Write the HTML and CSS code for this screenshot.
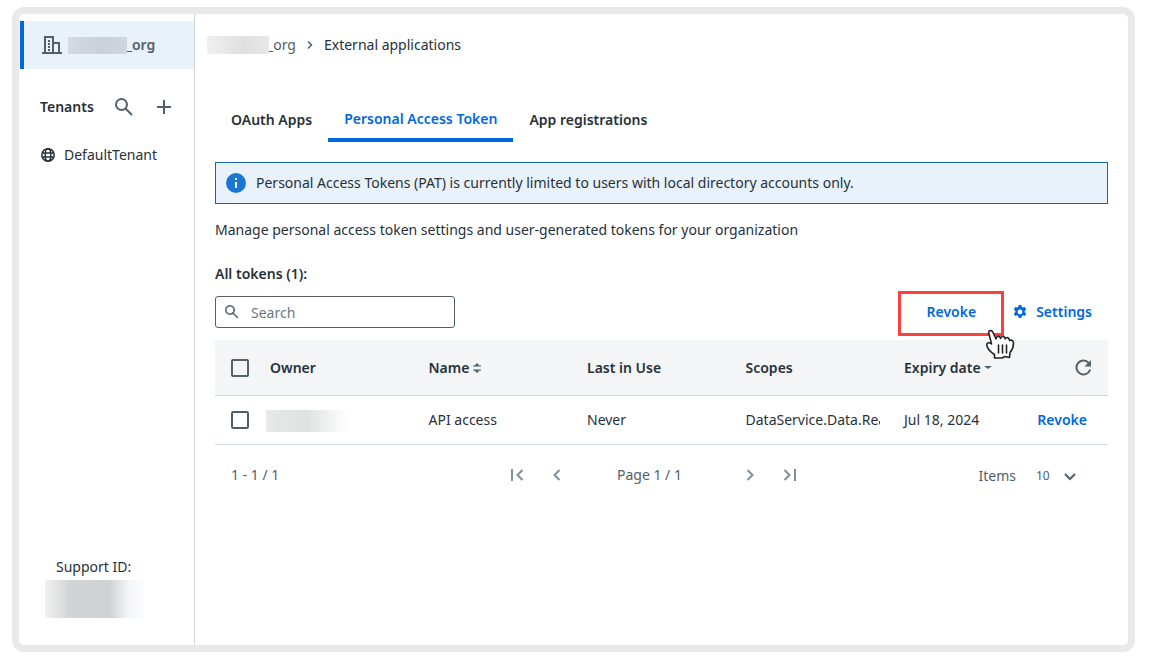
FILE: index.html
```html
<!DOCTYPE html>
<html lang="en">
<head>
<meta charset="utf-8">
<title>External applications</title>
<link rel="stylesheet" href="styles.css">
</head>
<body>
<div class="frame">
  <aside class="sidebar">
    <a class="org" href="#">
      <svg class="org-icon" width="20" height="18" viewBox="0 0 20 18" fill="none" stroke="currentColor" stroke-width="2"><path d="M0 17h20M3 17V1h8v16M11 7h6v10"/><path d="M7 4v11" stroke-dasharray="2 1"/></svg>
      <span class="redacted redacted-org"></span><span>_org</span>
    </a>
    <div class="tenants">
      <span class="tenants-title">Tenants</span>
      <button class="icon-button" aria-label="Search tenants"><svg width="18" height="18" viewBox="0 0 18 18" fill="none" stroke="currentColor" stroke-width="2"><circle cx="6.500" cy="6.500" r="5.500"/><path d="M10.500 10.500l6.500 6.500"/></svg></button>
      <button class="icon-button" aria-label="Add tenant"><svg width="14" height="14" viewBox="0 0 14 14" fill="none" stroke="currentColor" stroke-width="2"><path d="M7 0v14M0 7h14"/></svg></button>
    </div>
    <a class="tenant" href="#">
      <svg width="14" height="14" viewBox="0 0 14 14" fill="none" stroke="currentColor" stroke-width="1.500"><circle cx="7" cy="7" r="6.200"/><ellipse cx="7" cy="7" rx="2.800" ry="6.200"/><path d="M1.200 4.900h11.600M1.200 9.100h11.600"/></svg>
      <span>DefaultTenant</span>
    </a>
    <div class="support">
      <span class="support-label">Support ID:</span>
      <span class="redacted redacted-support"></span>
    </div>
  </aside>
  <main class="main">
    <nav class="breadcrumb" aria-label="Breadcrumb">
      <a class="crumb" href="#"><span class="redacted redacted-crumb"></span>_org</a>
      <svg width="6" height="10" viewBox="0 0 6 10" fill="none" stroke="#526069" stroke-width="1.500"><path d="M1 1.500L4.500 5 1 8.500"/></svg>
      <span>External applications</span>
    </nav>
    <div class="tabs" role="tablist">
      <button class="tab" role="tab">OAuth Apps</button>
      <button class="tab tab-active" role="tab" aria-selected="true">Personal Access Token</button>
      <button class="tab" role="tab">App registrations</button>
    </div>
    <div class="content">
      <div class="notice">
        <svg width="20" height="20" viewBox="0 0 20 20"><circle cx="10" cy="10" r="10" fill="#1976d2"/><path d="M9 5h2v2H9zM9 9h2v6H9z" fill="#fff"/></svg>
        <span>Personal Access Tokens (PAT) is currently limited to users with local directory accounts only.</span>
      </div>
      <p class="description">Manage personal access token settings and user-generated tokens for your organization</p>
      <h2 class="heading">All tokens (1):</h2>
      <div class="toolbar">
        <label class="search">
          <svg width="14" height="14" viewBox="0 0 14 14" fill="none" stroke="currentColor" stroke-width="1.500"><circle cx="5" cy="5" r="4.200"/><path d="M8 8l5 5"/></svg>
          <input type="text" placeholder="Search" aria-label="Search">
        </label>
        <div class="actions">
          <div class="highlight">
            <button class="link-button">Revoke</button>
            <svg class="hand" width="30" height="32" viewBox="0 0 30 32" fill="#fff" stroke="#222" stroke-width="1.600" stroke-linejoin="round" stroke-linecap="round"><path d="M3 5C1.500 1.500 5.500.500 7 3.500L10 10C10.500 6.500 14 6.500 14.500 9.500 15.500 6.500 19 7 19.200 10 20.500 7.500 23.500 8.500 23.500 11.500 26 10.500 27.500 12 27.500 14.500c0 4-1 6-3.500 9l-.500 5-4.500-1-3 1.500L8.500 29v-3.500C4.500 23 2 20.500 1 17c-1-3.500 2-4 4.500-2z"/><path d="M12.500 16v8M16.500 16v8M20.500 16v8" fill="none"/></svg>
          </div>
          <button class="link-button settings">
            <svg width="14" height="14" viewBox="0 0 14 14" fill="currentColor" fill-rule="evenodd"><path d="M5.600 0h2.800l.400 1.900 1.200.700 1.800-.700 1.400 2.500-1.500 1.300v1.500l1.500 1.300-1.400 2.500-1.800-.700-1.200.700-.400 1.900H5.600l-.400-1.900-1.200-.700-1.800.700-1.400-2.500 1.500-1.300V5.700L.800 4.400l1.400-2.500 1.800.700 1.200-.700zM7 4.600a2.400 2.400 0 100 4.800 2.400 2.400 0 000-4.800z"/></svg>
            Settings
          </button>
        </div>
      </div>
      <table class="tokens">
        <colgroup><col class="col-check"><col class="col-text"><col class="col-text"><col class="col-text"><col class="col-text"><col><col class="col-action"></colgroup>
        <thead>
          <tr>
            <th><input class="check" type="checkbox" aria-label="Select all"></th>
            <th>Owner</th>
            <th>Name <svg class="sort" width="8" height="10" viewBox="0 0 8 10" fill="#526069"><path d="M4 0l2.500 2.500H8v1H0v-1h1.500zM4 10l2.500-2.500H8v-1H0v1h1.500z"/></svg></th>
            <th>Last in Use</th>
            <th>Scopes</th>
            <th>Expiry date <svg class="sort" width="8" height="10" viewBox="0 0 8 10"><path d="M0 3h8L4 6z" fill="#526069"/></svg></th>
            <th class="cell-action"><button class="icon-button refresh" aria-label="Refresh"><svg width="17" height="17" viewBox="0 0 17 17"><path d="M15.200 10.500A7 7 0 1 1 13.700 3.800" fill="none" stroke="currentColor" stroke-width="2"/><path d="M16 1V7.500H9.500z" fill="currentColor"/></svg></button></th>
          </tr>
        </thead>
        <tbody>
          <tr>
            <td><input class="check" type="checkbox" aria-label="Select API access"></td>
            <td class="cell-owner"><span class="redacted redacted-owner"></span></td>
            <td>API access</td>
            <td>Never</td>
            <td><div class="clip">DataService.Data.Read</div></td>
            <td>Jul 18, 2024</td>
            <td class="cell-action"><button class="link-button">Revoke</button></td>
          </tr>
        </tbody>
      </table>
      <div class="pager">
        <span>1 - 1 / 1</span>
        <div class="pages">
          <button class="icon-button page-button" aria-label="First page"><svg width="14" height="12" viewBox="0 0 14 12" fill="none" stroke="currentColor" stroke-width="2"><path d="M2 0v12M12.500 1L7.500 6l5 5"/></svg></button>
          <button class="icon-button page-button" aria-label="Previous page"><svg width="8" height="12" viewBox="0 0 8 12" fill="none" stroke="currentColor" stroke-width="2"><path d="M6.500 1L1.500 6l5 5"/></svg></button>
          <span class="page-label">Page 1 / 1</span>
          <button class="icon-button page-button" aria-label="Next page"><svg width="8" height="12" viewBox="0 0 8 12" fill="none" stroke="currentColor" stroke-width="2"><path d="M1.500 1l5 5-5 5"/></svg></button>
          <button class="icon-button page-button" aria-label="Last page"><svg width="14" height="12" viewBox="0 0 14 12" fill="none" stroke="currentColor" stroke-width="2"><path d="M12 0v12M1.500 1l5 5-5 5"/></svg></button>
        </div>
        <div class="items">
          <label for="page-size">Items</label>
          <div class="select">
            <select id="page-size"><option>10</option></select>
            <svg class="chevron" width="12" height="8" viewBox="0 0 12 8" fill="none" stroke="currentColor" stroke-width="2"><path d="M1 1l5 5 5-5"/></svg>
          </div>
        </div>
      </div>
    </div>
  </main>
</div>
</body>
</html>
```

FILE: styles.css
```css
* { box-sizing: border-box; }

body {
  margin: 0;
  padding: 7px 14px 13px 12px;
  min-height: 100vh;
  display: flex;
  background: #fff;
  color: #273139;
  font: 14px/20px "Noto Sans", sans-serif;
}

svg { display: block; flex: none; }
a { color: inherit; text-decoration: none; }
button, input, select { font: inherit; color: inherit; }
button { padding: 0; border: 0; background: none; cursor: pointer; }

.frame {
  flex: 1;
  display: flex;
  border: 7px solid #e9e9e9;
  border-radius: 12px;
}

.sidebar {
  flex: none;
  width: 176px;
  display: flex;
  flex-direction: column;
  padding: 7px 0 27px 1px;
  border-right: 1px solid #cfd8dd;
}

.org {
  display: flex;
  align-items: center;
  height: 48px;
  padding-left: 18px;
  border-left: 4px solid #0067df;
  background: #e9f1fa;
  color: #526069;
  font-weight: 600;
}

.org-icon { margin-right: 6px; }

/* Masks overlap the first character of the text that follows them. */
.redacted { display: block; flex: none; position: relative; z-index: 1; }
.redacted-org { width: 59px; height: 17px; margin-right: -1px; background: linear-gradient(90deg, #d4dae2, #c9d0d9 60%, #d0d6df); }
.redacted-crumb { width: 62px; height: 18px; margin-right: -2px; background: linear-gradient(90deg, #f0f0f0, #dfdfe0 60%, #e8e8e9); }
.redacted-owner { width: 82px; height: 22px; background: linear-gradient(90deg, #e7e8e8, #e0e1e1 50%, #fff); }
.redacted-support { width: 99px; height: 38px; background: linear-gradient(90deg, #f1f1f1, #d3d4d6 25%, #d0d1d3 65%, #f5f6f9 85%, #fcfcfd); }

.tenants { display: flex; align-items: center; height: 24px; margin-top: 26px; padding-left: 20px; }
.tenants-title { width: 75px; font-weight: 600; }
.tenants .icon-button + .icon-button { margin-left: 24px; }
.icon-button { display: flex; align-items: center; justify-content: center; color: #526069; }

.tenant { display: flex; align-items: center; gap: 9px; height: 24px; margin-top: 24px; padding-left: 21px; }

.support { display: flex; flex-direction: column; gap: 3px; margin-top: auto; padding-left: 25px; }
.support-label { padding-left: 11px; }

.main { flex: 1; min-width: 0; padding-top: 20px; }

.breadcrumb { display: flex; align-items: center; gap: 11px; height: 22px; padding-left: 12px; }
.crumb { display: flex; align-items: center; color: #526069; }

.tabs { display: flex; margin-top: 40px; padding: 0 20px; }
.tab { height: 46px; padding: 2px 16px 0; font-weight: 600; }
.tab-active { padding: 4px 16px 0; border-bottom: 4px solid #0067df; color: #0067df; }

.content { padding: 20px 20px 0; }

.notice {
  display: flex;
  align-items: center;
  gap: 10px;
  height: 42px;
  padding: 0 10px;
  border: 1px solid #1665b3;
  background: #e9f1fa;
}

.description { margin: 16px 0 24px; }
.heading { margin: 0 0 12px; font-size: 14px; line-height: 20px; font-weight: 600; }

.toolbar { display: flex; justify-content: space-between; align-items: center; height: 32px; }

.search {
  display: flex;
  align-items: center;
  gap: 12px;
  width: 240px;
  height: 32px;
  padding: 0 9px;
  border: 1px solid #526069;
  border-radius: 3px;
  color: #526069;
}

.search input { flex: 1; min-width: 0; padding: 2px 0 0; border: 0; outline: 0; background: none; }
.search input::placeholder { color: #6b7882; opacity: 1; }

.actions { display: flex; align-items: center; gap: 9px; padding-right: 16px; }
.link-button { color: #0067df; font-weight: 600; }
.settings { display: flex; align-items: center; gap: 9px; }

.highlight { position: relative; margin-top: 2px; padding: 8px 25px 11px 26px; border: 3px solid #fa4141; }
.hand { position: absolute; right: -15px; bottom: -28px; z-index: 1; }

.tokens { width: 100%; margin-top: 12px; border-collapse: separate; border-spacing: 0; table-layout: fixed; }
.tokens th, .tokens td { padding: 0 8px 0 16px; border-bottom: 1px solid #cfd8dd; text-align: left; white-space: nowrap; }
.tokens th { height: 56px; background: #f4f5f7; font-weight: 600; }
.tokens td { height: 49px; }
.col-check { width: 39px; }
.col-text { width: 17.75%; }
.col-action { width: 90px; }
.tokens .cell-owner { padding-top: 1px; padding-left: 12px; }
.tokens .cell-action { padding: 0 21px 0 0; text-align: right; }
.tokens th.cell-action { padding-right: 16px; }
.refresh { margin-left: auto; }
.clip { overflow: hidden; }
.sort { display: inline-block; vertical-align: 0; }

.check {
  appearance: none;
  display: block;
  width: 18px;
  height: 18px;
  margin: 0;
  border: 2px solid #526069;
  border-radius: 2px;
  background: #fff;
}

.tokens th .check { background: none; }

.pager {
  display: grid;
  grid-template-columns: 1fr auto 1fr;
  align-items: center;
  height: 60px;
  padding: 0 32px 0 16px;
  color: #526069;
}

.pages { display: flex; align-items: center; }
.page-button { width: 40px; height: 40px; color: #80909a; }
.page-label { padding: 0 48px 0 40px; }

.items { display: flex; align-items: center; justify-content: flex-end; gap: 20px; padding-top: 2px; }
.select { position: relative; }
.select select { appearance: none; display: block; width: 40px; padding: 0; border: 0; background: none; font-size: 12px; }
.chevron { position: absolute; right: 0; top: 7px; pointer-events: none; }
```
